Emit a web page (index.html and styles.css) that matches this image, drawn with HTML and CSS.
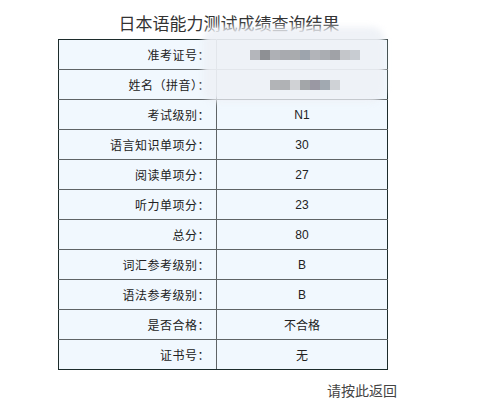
FILE: index.html
```html
<!DOCTYPE html>
<html lang="zh">
<head>
<meta charset="utf-8">
<link rel="stylesheet" href="styles.css">
</head>
<body>
<div class="page">
  <h1 class="title">日本语能力测试成绩查询结果</h1>
  <table class="result">
    <tr><td class="label">准考证号：</td><td class="value"></td></tr>
    <tr><td class="label">姓名（拼音）：</td><td class="value"></td></tr>
    <tr><td class="label">考试级别：</td><td class="value num">N1</td></tr>
    <tr><td class="label">语言知识单项分：</td><td class="value num">30</td></tr>
    <tr><td class="label">阅读单项分：</td><td class="value num">27</td></tr>
    <tr><td class="label">听力单项分：</td><td class="value num">23</td></tr>
    <tr><td class="label">总分：</td><td class="value num">80</td></tr>
    <tr><td class="label">词汇参考级别：</td><td class="value num">B</td></tr>
    <tr><td class="label">语法参考级别：</td><td class="value num">B</td></tr>
    <tr><td class="label">是否合格：</td><td class="value">不合格</td></tr>
    <tr><td class="label">证书号：</td><td class="value">无</td></tr>
  </table>
  <div class="back">请按此返回</div>

  <div class="redact">
    <div class="haze"></div>
    <div class="pix pix1">
      <span style="background:#b4b6bb"></span><span style="background:#8e9094"></span><span style="background:#aeb0b5"></span><span style="background:#a8aaaf"></span><span style="background:#a9abae"></span><span style="background:#9da4ad"></span><span style="background:#b2b4b9"></span><span style="background:#aaadb2"></span><span style="background:#a0a2a7"></span><span style="background:#c4c6ca"></span><span style="background:#c8ccd2"></span>
    </div>
    <div class="pix pix2">
      <span style="background:#b2b4b7"></span><span style="background:#b0b2b5"></span><span style="background:#d0d2d5"></span><span style="background:#a3a6a9"></span><span style="background:#9a98a3"></span><span style="background:#a1a9b1"></span><span style="background:#cfd2d6"></span>
    </div>
  </div>
</div>
</body>
</html>
```
FILE: styles.css
```css
html, body {
  margin: 0;
  padding: 0;
  background: #ffffff;
}
.page {
  position: relative;
  width: 500px;
  height: 418px;
  font-family: "Noto Sans CJK SC", "Liberation Sans", sans-serif;
  color: #222;
}
.title {
  margin: 0;
  padding: 12px 0 0 12px;
  width: 330px;
  margin-left: 58px;
  height: 29px;
  box-sizing: border-box;
  text-align: center;
  font-size: 17px;
  line-height: 22px;
  font-weight: normal;
  color: #333;
  white-space: nowrap;
}
.result {
  margin-left: 58px;
  margin-top: 10px;
  width: 330px;
  border-collapse: collapse;
  border: 1px solid #1c2b2b;
  background: #f1f8fe;
}
.result td {
  height: 30px;
  padding: 0;
  border: 1px solid #5f6466;
  font-size: 12px;
  line-height: 16px;
  box-sizing: border-box;
}
.result tr:first-child td { border-top-color: #1c2b2b; }
.result tr:last-child td { border-bottom-color: #1c2b2b; }
.result td:first-child { border-left-color: #1c2b2b; }
.result td:last-child { border-right-color: #1c2b2b; }
.label {
  width: 158px;
  text-align: right;
  padding-right: 6px !important;
  letter-spacing: 0.5px;
}
.value {
  text-align: center;
}
.num {
  font-family: "Liberation Sans", sans-serif;
  font-size: 12px;
}
.back {
  margin: 10px 0 0 327px;
  font-size: 14px;
  line-height: 20px;
  color: #444;
}
.redact {
  position: absolute;
  left: 203px;
  top: 27px;
  width: 182px;
  height: 75px;
}
.haze {
  position: absolute;
  inset: 0;
  background: rgba(238, 241, 246, 0.92);
  border-radius: 14px;
  filter: blur(3px);
}
.pix {
  position: absolute;
  display: flex;
  height: 10px;
}
.pix span {
  display: block;
  width: 10px;
  height: 10px;
}
.pix1 { left: 47px; top: 23px; }
.pix2 { left: 67px; top: 53px; }
```
